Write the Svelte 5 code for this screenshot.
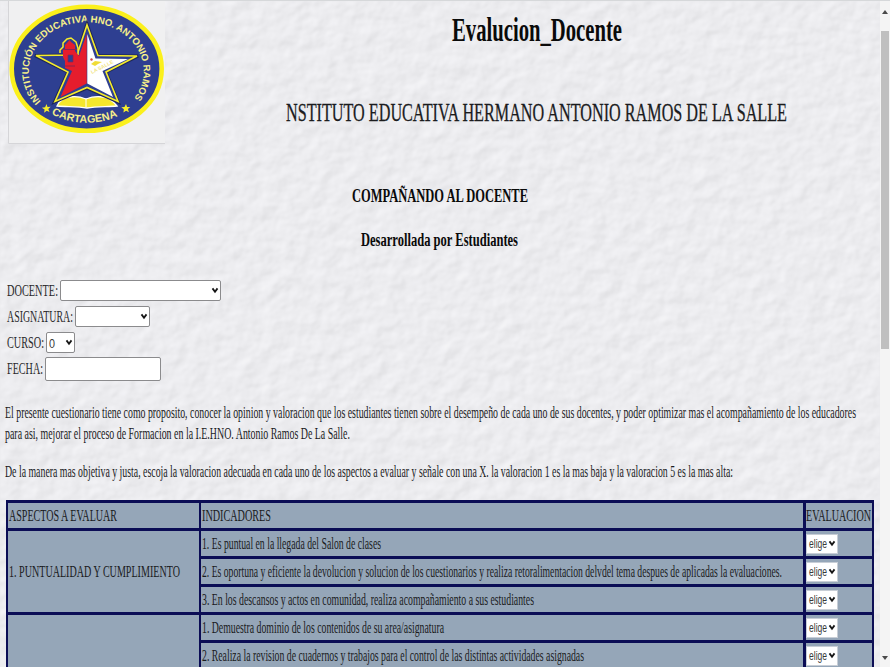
<script>
  const groups = [
    {
      title: '1. PUNTUALIDAD Y CUMPLIMIENTO',
      width: 171,
      items: [
        ['1. Es puntual en la llegada del Salon de clases', 179],
        ['2. Es oportuna y eficiente la devolucion y solucion de los cuestionarios y realiza retoralimentacion delvdel tema despues de aplicadas la evaluaciones.', 580],
        ['3. En los descansos y actos en comunidad, realiza acompañamiento a sus estudiantes', 332]
      ]
    },
    {
      title: '',
      width: 0,
      items: [
        ['1. Demuestra dominio de los contenidos de su area/asignatura', 242],
        ['2. Realiza la revision de cuadernos y trabajos para el control de las distintas actividades asignadas', 382]
      ]
    }
  ];
  const fields = [
    { label: 'DOCENTE:', labelWidth: 51, width: 161, kind: 'select', value: '' },
    { label: 'ASIGNATURA:', labelWidth: 66, width: 75, kind: 'select', value: '' },
    { label: 'CURSO:', labelWidth: 37, width: 29, kind: 'select', value: '0' },
    { label: 'FECHA:', labelWidth: 36, width: 116, kind: 'input', value: '' }
  ];
</script>

{#snippet line(text, width, size, height, base, cls = '')}
  <svg class="line {cls}" {width} {height}>
    <text x="0" y={base} font-size={size} textLength={width} lengthAdjust="spacingAndGlyphs">{text}</text>
  </svg>
{/snippet}

{#snippet chevron()}
  <svg class="chevron" width="8" height="7" viewBox="0 0 8 7"><path d="M1.5 1.4 4 4.8 6.5 1.4" /></svg>
{/snippet}

<div class="page">
  <svg class="paper" width="880" height="667">
    <filter id="grain" x="0" y="0" width="100%" height="100%" color-interpolation-filters="sRGB">
      <feTurbulence type="fractalNoise" baseFrequency="0.06 0.07" numOctaves="3" seed="8" />
      <feDiffuseLighting surfaceScale="0.85" diffuseConstant="1.15" lighting-color="#ebebee">
        <feDistantLight azimuth="225" elevation="62" />
      </feDiffuseLighting>
      <feGaussianBlur stdDeviation="0.8" />
    </filter>
    <rect width="880" height="667" fill="#eaeaed" />
    <rect width="880" height="667" filter="url(#grain)" opacity="0.5" />
  </svg>

  <main>
    <header>
      <svg class="logo" width="157" height="143" viewBox="8 1 157 143">
        <rect x="8" y="1" width="157" height="143" fill="#f0f0f1" />
        <path d="M8.5 1V143.5H165" fill="none" stroke="#d5d5d8" />
        <ellipse cx="86.7" cy="68.8" rx="75" ry="62" fill="#2e3f91" stroke="#fbf01c" stroke-width="4.6" />
        <path id="top-arc" d="M41 101.5A57.5 49 0 1 1 130 103" fill="none" />
        <path id="low-arc" d="M51.5 114A65 54.5 0 0 0 122 114" fill="none" />
        <text class="ring" font-size="9.6"><textPath href="#top-arc">INSTITUCIÓN EDUCATIVA HNO. ANTONIO RAMOS</textPath></text>
        <text class="ring" font-size="10.8"><textPath href="#low-arc">CARTAGENA</textPath></text>
        <path d="M46.5 104l1 3 3.2-.3-2.4 2.4 1.2 3-2.8-1.4-2.6 2 .5-3.2-2.8-1.8 3.3-.5zM126 104l1.1 3 3.2-.1-2.4 2.2 1 3.1-2.8-1.5-2.7 1.8.5-3.2-2.6-2 3.2-.4z" fill="#f5ec2b" />
        <path d="M57 106c3-6 7-9 13-9 6-1 11 0 16 2 5-2 11-3 17-2 6 0 10 4 14 9-10 1-20 0-30 2-10-2-20-1-30-2z" fill="#f5e72d" stroke="#fff" stroke-width="1.3" />
        <path d="M86 98v9" stroke="#fff" />
        <path d="M87 24 98 55.5 138 56 106 72 118 102 87 88 54.5 102 68 72 35 55.5 77 55Z" fill="#2e3f91" stroke="#1e2759" stroke-width="3.2" />
        <path d="M87 25 98 55.5 137 56 106 72 118 101.5 87 87.5 55 101.5 68 72 36 55.5 77 55Z" fill="#2e3f91" stroke="#f5ec2b" stroke-width="1.6" />
        <path d="M60 53V50L63 47V43L67 39L71 38L76 42L78 48V55" fill="#2e3f91" stroke="#f5ec2b" stroke-width="1.5" />
        <path d="M86.7 34V83.5L60.5 97 72 71 65 68V61L63 57V50H65V45L68 42 69.5 40 71 42 75 45V51L79 56Z" fill="#e51d2d" />
        <path d="M68 55h5v7h-5z" fill="#2e3f91" stroke="#8c234f" stroke-width=".7" />
        <path d="M62 49.5h15M65 66h10" stroke="#8c234f" />
        <path d="M87.3 34 95.5 58.5 128 59 102.5 71 113 97 87.3 83.5Z" fill="#fff" />
        <path d="M91 64l4-3 7 1-4 2-3 2z" fill="#f0dc35" />
        <circle cx="91.5" cy="59.5" r="1.2" fill="#c44" />
        <text class="salle" x="92" y="74" transform="rotate(-27 92 74)">LA SALLE</text>
      </svg>
      <div class="titles">
        <h1>{@render line('Evalucion_Docente', 170, 33, 40, 32, 'bold')}</h1>
        <h2>{@render line('NSTITUTO EDUCATIVA HERMANO ANTONIO RAMOS DE LA SALLE', 501, 26, 30, 23, 'sub')}</h2>
      </div>
    </header>

    <section class="intro">
      {@render line('COMPAÑANDO AL DOCENTE', 176, 18.7, 24, 18.2, 'bold')}
      {@render line('Desarrollada por Estudiantes', 157, 18.7, 24, 18.2, 'bold')}
    </section>

    <form>
      {#each fields as f}
        <div class="field">
          {@render line(f.label, f.labelWidth, 17.5, 22, 15.5, 'thin')}
          <div class="box {f.kind}" style="width: {f.width}px">
            {#if f.value}{@render line(f.value, 6, 13.5, 18, 13.5, 'sans')}{/if}
            {#if f.kind === 'select'}{@render chevron()}{/if}
          </div>
        </div>
      {/each}
    </form>

    <section class="copy">
      {@render line('El presente cuestionario tiene como proposito, conocer la opinion y valoracion que los estudiantes tienen sobre el desempeño de cada uno de sus docentes, y poder optimizar mas el acompañamiento de los educadores', 851, 17, 22, 16.5)}
      {@render line('para asi, mejorar el proceso de Formacion en la I.E.HNO. Antonio Ramos De La Salle.', 345, 17, 22, 16)}
      <div class="gap"></div>
      {@render line('De la manera mas objetiva y justa, escoja la valoracion adecuada en cada uno de los aspectos a evaluar y señale con una X. la valoracion 1 es la mas baja y la valoracion 5 es la mas alta:', 728, 17, 22, 16)}
    </section>

    <div class="table">
      <div class="group">
        <div class="cell aspect">{@render line('ASPECTOS A EVALUAR', 108, 17.3, 22, 16)}</div>
        <div class="rows">
          <div class="row">
            <div class="cell item">{@render line('INDICADORES', 69, 17.3, 22, 16)}</div>
            <div class="cell score">{@render line('EVALUACION', 65, 17.3, 22, 16)}</div>
          </div>
        </div>
      </div>
      {#each groups as g}
        <div class="group">
          <div class="cell aspect">
            {#if g.title}{@render line(g.title, g.width, 17.3, 22, 15.5)}{/if}
          </div>
          <div class="rows">
            {#each g.items as [text, width]}
              <div class="row">
                <div class="cell item">{@render line(text, width, 17, 22, 16)}</div>
                <div class="cell score">
                  <div class="elige">{@render line('elige', 18, 13.5, 18, 13.3, 'sans')}{@render chevron()}</div>
                </div>
              </div>
            {/each}
          </div>
        </div>
      {/each}
    </div>
  </main>

  <aside>
    <svg width="10" height="30"><path d="M2 13 5 9 8 13Z" fill="#4a4a4a" /></svg>
    <div class="thumb"></div>
    <svg class="down" width="10" height="20"><path d="M2 9 5 13 8 9Z" fill="#4a4a4a" /></svg>
  </aside>
</div>

<style>
  :global(body) { margin: 0; overflow: hidden; }
  .page {
    position: relative;
    display: flex;
    box-sizing: border-box;
    width: 890px;
    height: 667px;
    overflow: hidden;
    background: #e7e7ea;
    border-top: 1px solid #d6d8da;
    font-family: 'Liberation Serif', 'Times New Roman', serif;
    color: #111;
  }
  .paper { position: absolute; inset: 0; }
  main { position: relative; width: 880px; flex: none; display: flex; flex-direction: column; }
  .line { display: block; flex: none; overflow: visible; fill: #1b1c1e; }
  .bold { font-weight: 700; fill: #0a0a0a; }
  .sub { stroke: #1b1c1e; stroke-width: 0.3; }
  .sans { font-family: 'Liberation Sans', Arial, sans-serif; fill: #3a3a3a; }
  .thin { fill: #2a2a2c; }
  header { display: flex; height: 143px; padding-left: 8px; flex: none; }
  .logo { flex: none; }
  .ring { font-family: 'Liberation Sans', Arial, sans-serif; font-weight: 700; fill: #f7f08a; }
  .salle { font: 700 5px 'Liberation Sans', Arial, sans-serif; fill: #efe27a; }
  .titles { width: 743px; flex: none; display: flex; flex-direction: column; align-items: center; }
  h1, h2 { margin: 0; font-weight: 400; font-size: 16px; }
  h1 { padding-top: 8px; }
  h2 { padding-top: 49px; }
  .intro { display: flex; flex-direction: column; align-items: center; gap: 20px; box-sizing: border-box; padding-top: 40px; width: 879px; height: 136px; flex: none; }
  form { display: flex; flex-direction: column; gap: 5px; padding-left: 7px; height: 101px; flex: none; }
  .field { display: flex; align-items: center; height: 21px; gap: 1.5px; }
  .box { display: flex; align-items: center; justify-content: flex-end; box-sizing: border-box; height: 21px; padding: 0 1px 0 2px; background: #fff; border: 1px solid #8b8b8d; border-radius: 2px; }
  .box .line { margin-right: auto; }
  .box.input { height: 24px; margin-top: 1px; }
  .chevron { flex: none; fill: none; stroke: #151515; stroke-width: 1.8; }
  .copy { padding: 20px 0 0 5px; height: 119px; flex: none; box-sizing: border-box; }
  .gap { height: 16px; }
  .table { width: 868px; margin-left: 6px; box-sizing: border-box; border: solid #0b0d55; border-width: 3px 2px 0; background: #95a6b8; flex: none; }
  .group { display: flex; }
  .cell { display: flex; align-items: center; box-sizing: border-box; border-bottom: 3px solid #0b0d55; }
  .aspect { width: 193px; border-right: 2px solid #0b0d55; flex: none; padding-left: 1px; }
  .rows { flex: 1; }
  .row { display: flex; height: 28px; }
  .item { width: 605px; border-right: 3px solid #0b0d55; flex: none; padding-left: 1px; }
  .score { flex: 1; }
  .elige { display: flex; align-items: center; justify-content: space-between; box-sizing: border-box; width: 32px; height: 20px; padding: 0 1px 0 2px; background: #fff; border: 1px solid #c8ced6; }
  aside { position: relative; display: flex; flex-direction: column; width: 10px; background: #f4f4f4; }
  aside svg { flex: none; }
  .thumb { width: 8px; height: 318px; margin-left: 1px; background: #bfbfbf; }
  .down { margin-top: auto; }
</style>
